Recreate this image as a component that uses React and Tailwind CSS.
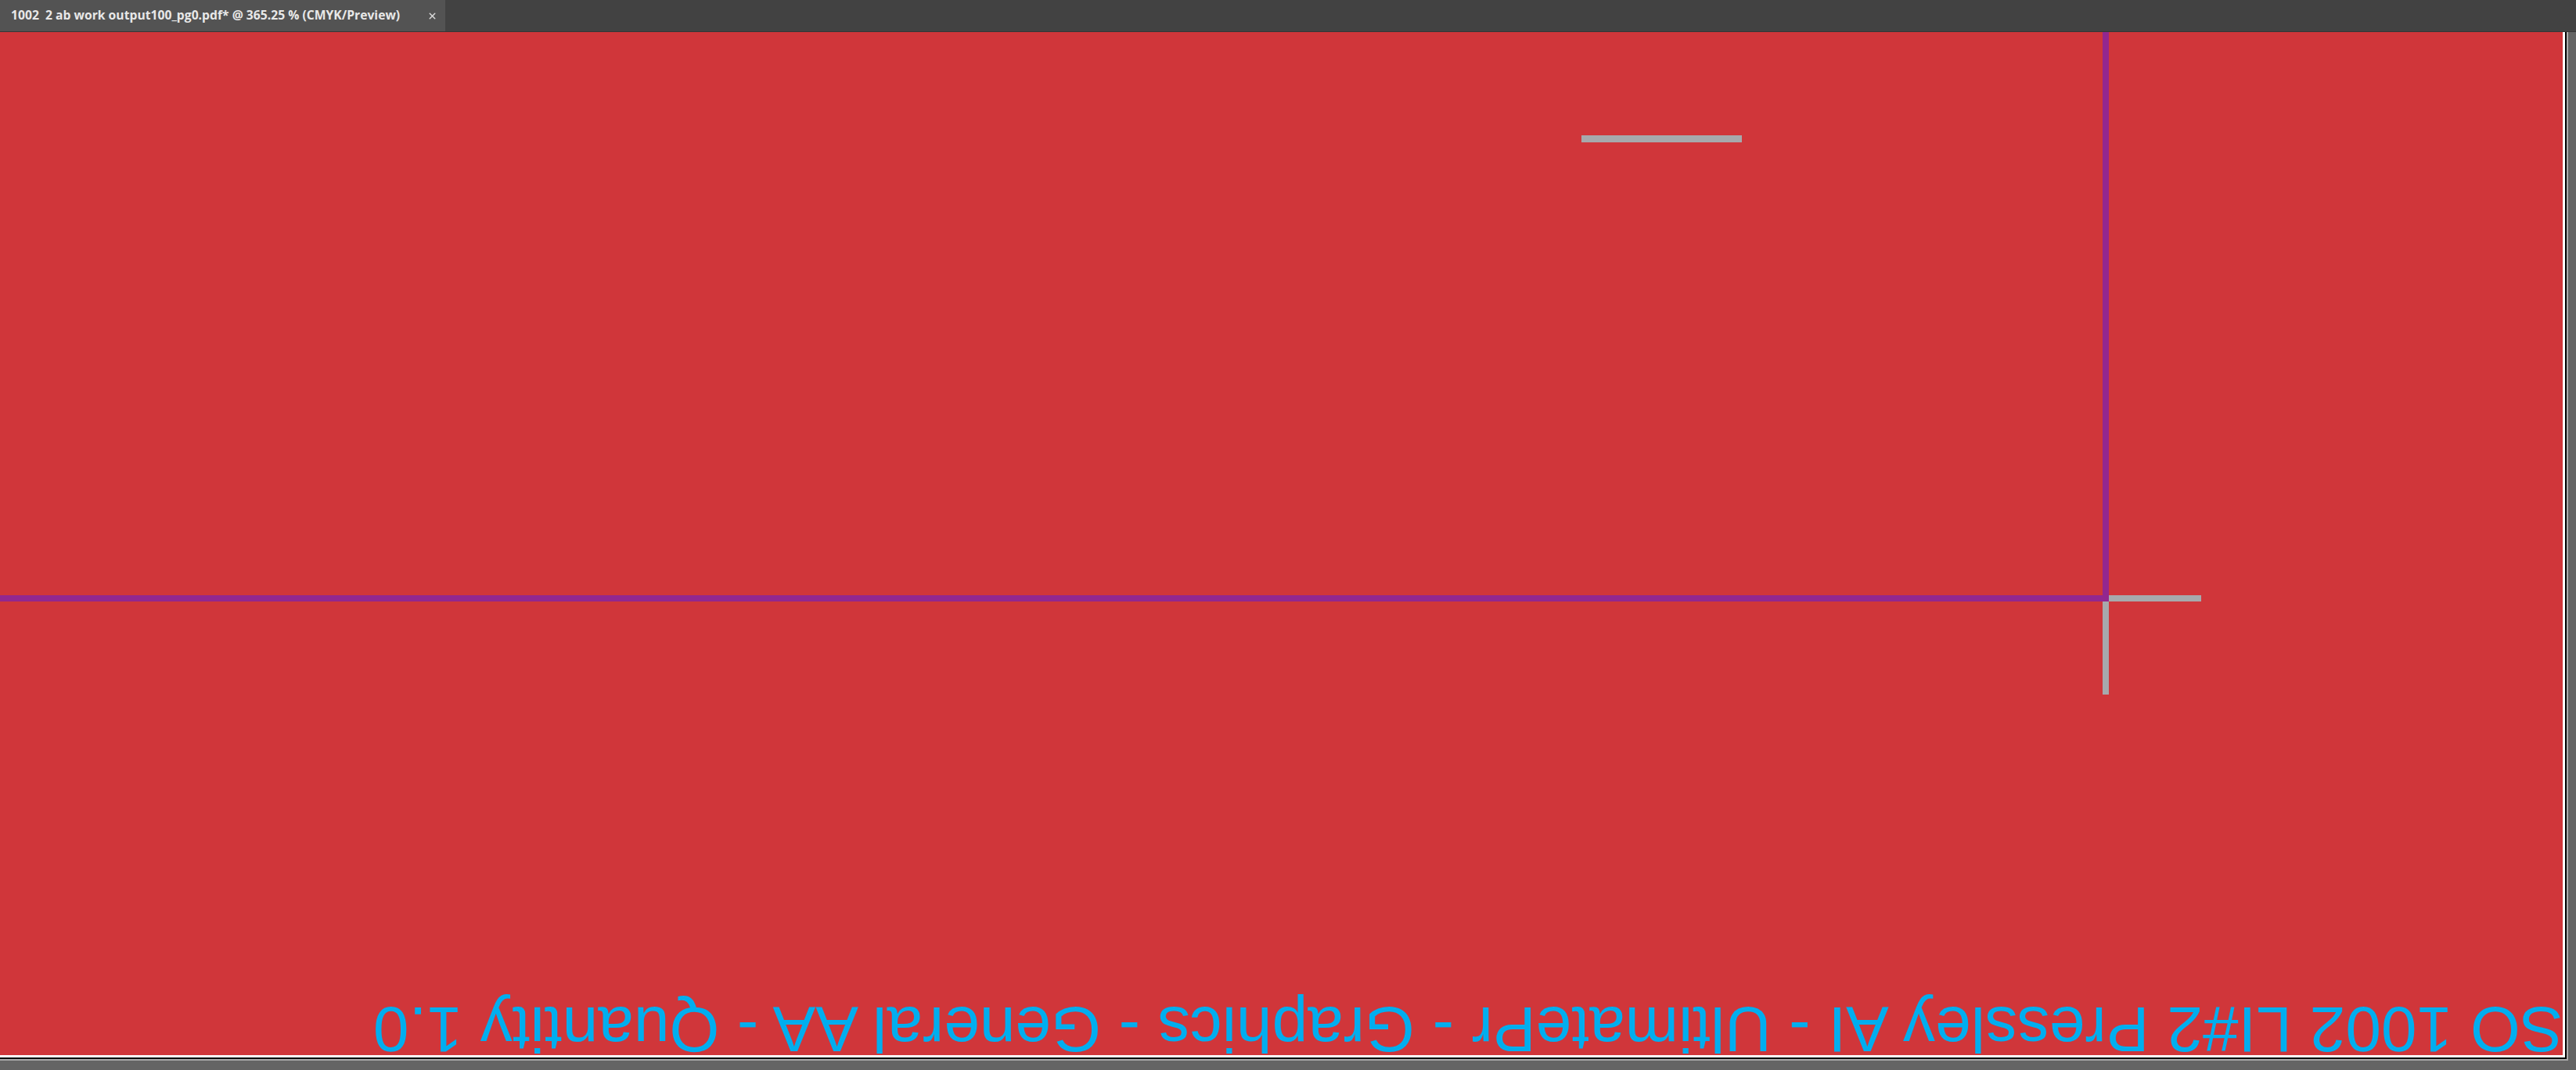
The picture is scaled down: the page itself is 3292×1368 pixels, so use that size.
import React from "react";
import { X } from "lucide-react";

export default function App() {
  return (
    <div className="w-[3292px] h-[1368px] bg-[#646464] flex flex-col overflow-hidden">
      {/* Document tab bar */}
      <div className="h-[41px] shrink-0 bg-[#424242] border-b border-[#363636] flex">
        <div className="w-[569px] h-full bg-[#535353] flex items-center pl-[14px] pr-[10px] justify-between">
          <span
            className="whitespace-pre text-[15.7px] font-bold text-[#e8e8e8]"
            style={{ fontFamily: '"Open Sans", "Noto Sans", sans-serif' }}
          >
            {"1002  2 ab work output100_pg0.pdf* @ 365.25 % (CMYK/Preview)"}
          </span>
          <X size={13} strokeWidth={2.6} className="text-[#dcdcdc]" />
        </div>
      </div>

      {/* Canvas area */}
      <div className="flex-1 flex items-start">
        <div className="border-r-2 border-b-2 border-[#a9a9a9]">
          <div className="border-r-2 border-b-2 border-black">
            <div className="border-r-[3px] border-b-[3px] border-white">
              <div className="relative w-[3275px] h-[1308px] bg-[#d0363a] overflow-hidden">
                {/* top gray dash */}
                <div className="absolute left-[2021px] top-[132px] w-[205px] h-[9px] bg-[#a7a9ac]" />
                {/* purple vertical */}
                <div className="absolute left-[2687px] top-0 w-[8px] h-[728px] bg-[#92278f]" />
                {/* purple horizontal */}
                <div className="absolute left-0 top-[720px] w-[2695px] h-[8px] bg-[#92278f]" />
                {/* gray horizontal */}
                <div className="absolute left-[2695px] top-[720px] w-[118px] h-[8px] bg-[#a7a9ac]" />
                {/* gray vertical */}
                <div className="absolute left-[2687px] top-[728px] w-[8px] h-[119px] bg-[#a7a9ac]" />
                {/* upside-down label */}
                <div
                  className="absolute right-0 bottom-0 rotate-180 whitespace-pre text-[82px] leading-[0.8] text-[#00aeef]"
                  style={{ fontFamily: '"Liberation Sans", Arial, sans-serif' }}
                >
                  SO 1002 LI#2 Pressley AI - UltimatePr - Graphics - General AA - Quantity 1.0
                </div>
              </div>
            </div>
          </div>
        </div>
      </div>
    </div>
  );
}
